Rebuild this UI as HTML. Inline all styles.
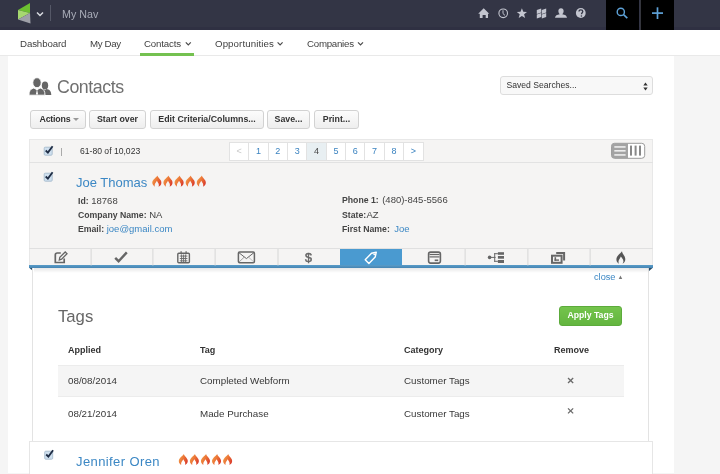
<!DOCTYPE html>
<html><head><meta charset="utf-8">
<style>
*{margin:0;padding:0;box-sizing:border-box}
html,body{width:720px;height:474px;overflow:hidden;background:#f5f5f5;font-family:"Liberation Sans",sans-serif;color:#444}
.a,.nv,.btn,.th,.td,#list,#exp{will-change:transform}
.a{position:absolute;white-space:nowrap}
#top{position:absolute;left:0;top:0;width:720px;height:30px;background:linear-gradient(#333545 0,#333545 27px,#2f3042 27px)}
#nav{position:absolute;left:0;top:30px;width:720px;height:26px;background:#fff;border-bottom:1px solid #e9e9e9}
.nv{position:absolute;top:8px;font-size:9.7px;color:#3f3f3f;line-height:12px;letter-spacing:-0.2px}
.chev{display:inline-block;width:4px;height:4px;border-right:1.3px solid #444;border-bottom:1.3px solid #444;transform:rotate(45deg);margin-left:6px;position:relative;top:-2px}
#panel{position:absolute;left:8px;top:56px;width:666px;height:417px;background:#fff}
.btn{position:absolute;top:110px;height:19px;border:1px solid #d2d2d2;border-radius:3px;background:linear-gradient(#fcfcfc,#eeeeee);font-size:8.8px;font-weight:bold;color:#333;text-align:center;line-height:17px}
#list{position:absolute;left:29px;top:139px;width:624px;height:129px;background:#f5f4f3;border:1px solid #e8e8e8}
.pg{flex:1;height:100%;border-left:1px solid #e2e2e2;font-size:9px;color:#3b83c0;text-align:center;line-height:16.5px}
.lbl{font-weight:bold;color:#444}
.f9{font-size:9.5px}
.f9 b{font-size:8.7px}
.tab{position:absolute;top:248px;height:17px;width:62px;border-right:1px solid #ddd}
#exp{position:absolute;left:32px;top:268px;width:617px;height:174px;background:#fff;border:1px solid #e3e3e3;border-top:none}
.th{position:absolute;top:345px;font-size:9px;font-weight:bold;color:#333}
.td{position:absolute;font-size:9.8px;color:#383838}
</style></head><body>
<div id="top">
  <svg class="a" style="left:17px;top:2px" width="15" height="23" viewBox="0 0 15 23">
    <polygon points="1,8 13,1 13,11" fill="#6cbf30"/>
    <polygon points="1,8 13,11 1,17.5" fill="#a6d870"/>
    <polygon points="1,17.5 13,11 13.5,21.5" fill="#9ea0a8"/>
  </svg>
  <svg class="a" style="left:36px;top:11px" width="8" height="6" viewBox="0 0 8 6"><polyline points="1,1.5 4,4.5 7,1.5" fill="none" stroke="#d8dae0" stroke-width="1.5"/></svg>
  <div class="a" style="left:50px;top:5px;width:1px;height:16px;background:#555867"></div>
  <div class="a" style="left:61.5px;top:8px;font-size:10.7px;line-height:13px;color:#a9acb8">My Nav</div>
  <svg class="a" style="left:470px;top:0" width="130" height="29" viewBox="470 0 130 29" fill="#c3c5cf">
    <path d="M478.2,13.8 L483.7,8.3 L489.2,13.8 L488,13.8 L488,18 L485.7,18 L485.7,15 L482.6,15 L482.6,18 L479.8,18 L479.8,13.8 Z"/>
    <circle cx="503.2" cy="13.3" r="4.3" fill="none" stroke="#c3c5cf" stroke-width="1.1"/>
    <polyline points="503,10.3 503,13.6 505,15.4" fill="none" stroke="#c3c5cf" stroke-width="1"/>
    <path d="M521.9,8.3 L523.3,11.7 L527,11.9 L524.1,14.3 L525.1,18 L521.9,15.9 L518.7,18 L519.7,14.3 L516.8,11.9 L520.5,11.7 Z"/>
    <path d="M536.8,10 L541.2,8.4 L541.2,12.4 L536.8,14 Z M536.8,14.6 L541.2,13 L541.2,16.9 L536.8,18.5 Z M541.8,10 L546.2,8.4 L546.2,12.4 L541.8,14 Z M541.8,14.6 L546.2,13 L546.2,16.9 L541.8,18.5 Z"/>
    <path d="M561,8.3 C563,8.3 563.8,9.8 563.6,11.5 C563.4,13 562.7,13.8 562.3,14.2 C565,14.6 566.8,15.6 567,17.8 L555,17.8 C555.2,15.6 557,14.6 559.7,14.2 C559.3,13.8 558.6,13 558.4,11.5 C558.2,9.8 559,8.3 561,8.3 Z"/>
    <circle cx="580.8" cy="13" r="4.9"/>
    <path d="M579,11.6 C579,10.4 579.9,9.8 580.9,9.8 C582,9.8 582.8,10.5 582.8,11.5 C582.8,12.6 581.5,12.9 581.5,14.2" fill="none" stroke="#333545" stroke-width="1.3"/>
    <circle cx="581.4" cy="16" r="0.8" fill="#333545"/>
  </svg>
  <div class="a" style="left:606px;top:0;width:33px;height:30px;background:#000"></div>
  <div class="a" style="left:639.5px;top:0;width:1.5px;height:30px;background:#34353c"></div>
  <div class="a" style="left:641px;top:0;width:33px;height:30px;background:#000"></div>
  <svg class="a" style="left:606px;top:0" width="68" height="29" viewBox="606 0 68 29">
    <circle cx="620.8" cy="11.9" r="3.6" fill="none" stroke="#5ea2d8" stroke-width="1.4"/>
    <line x1="623.4" y1="14.5" x2="627.3" y2="18.2" stroke="#5ea2d8" stroke-width="1.7"/>
    <line x1="652" y1="13.1" x2="663" y2="13.1" stroke="#5ea2d8" stroke-width="1.7"/>
    <line x1="657.5" y1="7.3" x2="657.5" y2="19" stroke="#5ea2d8" stroke-width="1.7"/>
  </svg>
</div>
<div id="nav">
  <div class="nv" style="left:19.5px;letter-spacing:-0.12px">Dashboard</div>
  <div class="nv" style="left:89.5px;letter-spacing:-0.35px">My Day</div>
  <div class="nv" style="left:143.5px;letter-spacing:-0.15px">Contacts</div>
  <div class="nv" style="left:214.5px;letter-spacing:0.1px">Opportunities</div>
  <div class="nv" style="left:307px;letter-spacing:-0.25px">Companies</div>
  <svg class="a" style="left:0;top:0" width="400" height="26" viewBox="0 30 400 26" fill="none" stroke="#4a4a4a" stroke-width="1.2">
   <polyline points="185.8,42.3 188.3,44.8 190.8,42.3"/>
   <polyline points="277.6,42.3 280.1,44.8 282.6,42.3"/>
   <polyline points="358,42.3 360.5,44.8 363,42.3"/>
  </svg>
  <div class="a" style="left:140px;top:23px;width:54px;height:3px;background:#74c150"></div>
</div>
<div id="panel"></div>
<svg class="a" style="left:28px;top:76px" width="25" height="20" viewBox="28 76 25 20">
  <g fill="#666">
   <ellipse cx="45" cy="85.4" rx="3.2" ry="3.9"/>
   <path d="M41,95 L41,90.5 C41.5,89.6 42.5,89.2 43.6,88.9 L45,90 L46.4,88.9 C49.5,89.4 51.3,90.8 51.3,95 Z"/>
  </g>
  <g fill="#666" stroke="#fff" stroke-width="0.9">
   <ellipse cx="37" cy="82.7" rx="4.2" ry="5"/>
   <path d="M29,95.2 C29,91.2 30.3,88.9 33.8,88 L37,89.8 L40.2,88 C43.7,88.9 45,91.2 45,95.2 Z"/>
  </g>
  <path d="M36.3,89.4 L37.7,89.4 L37.3,90.6 L38.1,94.4 L35.9,94.4 L36.7,90.6 Z" fill="#fff"/>
</svg>
<div class="a" style="left:57.3px;top:76.6px;font-size:17.8px;line-height:20px;letter-spacing:-0.45px;color:#707070">Contacts</div>
<div class="btn" style="left:30px;width:56px;text-align:left;padding-left:8.5px"><span style="letter-spacing:-0.2px">Actions</span><span style="display:inline-block;width:0;height:0;border-left:3px solid transparent;border-right:3px solid transparent;border-top:3.5px solid #999;margin-left:3px;position:relative;top:-1.5px"></span></div>
<div class="btn" style="left:89px;width:57px">Start over</div>
<div class="btn" style="left:150px;width:114px">Edit Criteria/Columns...</div>
<div class="btn" style="left:267px;width:43px">Save...</div>
<div class="btn" style="left:314px;width:45px">Print...</div>
<div class="a" style="left:500px;top:76px;width:153px;height:19px;border:1px solid #ddd;border-radius:3px;background:#f8f8f8;font-size:8.6px;line-height:17px;padding-left:5.5px;color:#333">Saved Searches...<svg style="position:absolute;left:142px;top:5px" width="5" height="9" viewBox="0 0 5 9"><polygon points="0.3,3.6 2.5,0.4 4.7,3.6" fill="#333"/><polygon points="0.3,5.4 2.5,8.6 4.7,5.4" fill="#333"/></svg></div>

<div id="list"></div>
<div class="a" style="left:29px;top:161.5px;width:624px;height:1px;background:#e2e2e2"></div>
<svg class="a" style="left:40px;top:142px" width="16" height="16" viewBox="40 142 16 16">
  <rect x="44.2" y="147.2" width="8" height="8" rx="1" fill="#cfe0ef" stroke="#9fb5c8" stroke-width="0.8"/>
  <polyline points="45.7,150.5 47.9,152.6 52.6,146.3" fill="none" stroke="#1f2d45" stroke-width="1.8"/>
</svg>
<div class="a" style="left:61px;top:147.5px;width:1px;height:8px;background:#aaa"></div>
<div class="a" style="left:79.5px;top:146px;color:#333;line-height:11px;font-size:8.6px">61-80 of 10,023</div>
<div class="a" style="left:229px;top:141.5px;width:194.5px;height:18.5px;border:1px solid #e2e2e2;background:#fff;display:flex">
<div class="pg" style="color:#c8c8c8;border-left:none">&lt;</div><div class="pg">1</div><div class="pg">2</div><div class="pg">3</div><div class="pg" style="background:#e8eff2;color:#444">4</div><div class="pg">5</div><div class="pg">6</div><div class="pg">7</div><div class="pg">8</div><div class="pg">&gt;</div>
</div>
<svg class="a" style="left:610px;top:142px" width="36" height="18" viewBox="610 142 36 18">
  <rect x="611.5" y="143.3" width="33.2" height="15" rx="3" fill="#fff" stroke="#999" stroke-width="1"/>
  <path d="M614.5,143.3 L628,143.3 L628,158.3 L614.5,158.3 A3,3 0 0 1 611.5,155.3 L611.5,146.3 A3,3 0 0 1 614.5,143.3 Z" fill="#a3a3a3"/>
  <rect x="614.3" y="146.3" width="11.3" height="1.3" fill="#fff"/>
  <rect x="614.3" y="150.2" width="11.3" height="1.3" fill="#fff"/>
  <rect x="614.3" y="154.3" width="11.3" height="1.3" fill="#fff"/>
  <rect x="630" y="145.6" width="2" height="10" fill="#888"/>
  <rect x="634.6" y="145.6" width="2" height="10" fill="#888"/>
  <rect x="639" y="145.6" width="2" height="10" fill="#888"/>
</svg>
<svg class="a" style="left:40px;top:168px" width="16" height="16" viewBox="40 168 16 16">
  <rect x="44.2" y="173.2" width="8" height="8" rx="1" fill="#cfe0ef" stroke="#9fb5c8" stroke-width="0.8"/>
  <polyline points="45.7,176.5 47.9,178.6 52.6,172.3" fill="none" stroke="#1f2d45" stroke-width="1.8"/>
</svg>
<div class="a" style="left:75.5px;top:175px;font-size:13px;line-height:15px;color:#3b87c4">Joe Thomas</div>
<div class="a f9" style="left:78px;top:194.8px;line-height:11px;color:#444"><b>Id:</b> 18768</div>
<div class="a f9" style="left:78px;top:209px;line-height:11px;color:#444"><b>Company Name:</b> NA</div>
<div class="a f9" style="left:78px;top:222.5px;line-height:11px;color:#444"><b>Email:</b> <span style="color:#3b87c4">joe@gmail.com</span></div>
<div class="a f9" style="left:342px;top:194px;line-height:11px;color:#444"><b>Phone 1:</b><span style="margin-left:3.5px">(480)-845-5566</span></div>
<div class="a f9" style="left:342px;top:208.5px;line-height:11px;color:#444"><b>State:</b><span style="margin-left:0.3px">AZ</span></div>
<div class="a f9" style="left:342px;top:222.5px;line-height:11px;color:#444"><b>First Name:</b><span style="color:#3b87c4;margin-left:4.5px">Joe</span></div>
<div class="a" style="left:29px;top:248px;width:624px;height:1px;background:#e0e0e0"></div>
<div class="a" style="left:340px;top:248.5px;width:62px;height:17px;background:#4a9ad0"></div>
<div class="a" style="left:29px;top:265px;width:624px;height:3px;background:linear-gradient(#5a9cc8,#4585b3)"></div>
<svg class="a" style="left:29px;top:267px" width="624" height="6" viewBox="29 267 624 6"><polygon points="29.5,268 33.5,268 33.5,271.5" fill="#2a4d68"/><polygon points="652.5,268 648.5,268 648.5,271.5" fill="#2a4d68"/></svg>
<svg class="a" style="left:29px;top:248px" width="624" height="18" viewBox="29 248 624 18">
  <g fill="#d6d6d6">
   <rect x="90.6" y="249" width="1" height="16.5"/><rect x="152.4" y="249" width="1" height="16.5"/><rect x="214.6" y="249" width="1" height="16.5"/><rect x="277.5" y="249" width="1" height="16.5"/>
   <rect x="464.6" y="249" width="1" height="16.5"/><rect x="527.4" y="249" width="1" height="16.5"/><rect x="589.6" y="249" width="1" height="16.5"/>
  </g>
  <g fill="none" stroke="#666" stroke-width="1.7">
   <path d="M60.8,253 L57.3,253 Q55.3,253 55.3,255 L55.3,262.5 L64.2,262.5 L64.2,258.6" stroke-width="1.7"/>
   <path d="M59.3,260 L59.8,257.4 L65.2,252 L67,253.8 L61.6,259.2 Z" stroke-width="1.3"/>
   <polyline points="115.2,257.8 118.6,261.2 126.8,252.4" stroke-width="2.4"/>
   <rect x="177.8" y="253.2" width="11.6" height="9.6" rx="1" stroke-width="1.4"/>
   <rect x="238.4" y="252" width="16" height="10.8" rx="1.2" stroke-width="1.5"/>
   <polyline points="238.8,252.6 246.4,258.6 254,252.6" stroke-width="1"/><polyline points="238.8,262.2 244,257.2 M248.8,257.2 254,262.2" stroke-width="0.6" stroke="#999"/><line x1="238.8" y1="262.2" x2="244.4" y2="257" stroke-width="0.6" stroke="#999"/><line x1="254" y1="262.2" x2="248.4" y2="257" stroke-width="0.6" stroke="#999"/>
  </g>
  <g fill="#666">
   <rect x="180.5" y="251.2" width="1.2" height="3"/><rect x="185.5" y="251.2" width="1.2" height="3"/>
   <rect x="179.8" y="255.6" width="7.6" height="0.9"/><rect x="179.8" y="258" width="7.6" height="0.9"/><rect x="179.8" y="260.4" width="7.6" height="0.9"/>
   <rect x="181.2" y="254.5" width="0.9" height="7.5"/><rect x="183.2" y="254.5" width="0.9" height="7.5"/><rect x="185.2" y="254.5" width="0.9" height="7.5"/>
  </g>
  <text x="308.5" y="261.6" font-family="Liberation Sans" font-size="12.5" fill="#666" stroke="#666" stroke-width="0.5" text-anchor="middle">$</text>
  <g fill="none" stroke="#fff" stroke-width="1.4">
   <path d="M365.2,259.7 L371.5,253.3 L376.3,252.2 L375.2,257 L368.9,263.4 Z" stroke-linejoin="round"/>
   <circle cx="374.2" cy="254.3" r="0.9" fill="#fff" stroke="none"/>
  </g>
  <g fill="none" stroke="#666">
   <rect x="428.6" y="252.1" width="11.8" height="11" rx="2" stroke-width="1.6"/>
   <line x1="429.5" y1="254.5" x2="439.5" y2="254.5" stroke-width="1.2"/>
   <line x1="429.5" y1="256.9" x2="439.5" y2="256.9" stroke-width="1.2"/>
  </g>
  <g fill="#666">
   <rect x="434.7" y="259.5" width="3.5" height="1.6"/>
   <circle cx="489.6" cy="257.4" r="1.8"/>
   <rect x="489.6" y="256.9" width="6" height="1"/>
   <rect x="494.2" y="253.2" width="1" height="8.6"/>
   <rect x="494.2" y="253.2" width="3.7" height="1"/><rect x="494.2" y="260.8" width="3.7" height="1"/>
   <rect x="497.9" y="252.2" width="6.1" height="2.6"/><rect x="497.9" y="256" width="6.1" height="2.7"/><rect x="497.9" y="260" width="6.1" height="3"/>
   <path d="M556.2,251.9 L565.1,251.9 L565.1,260.5 L563.1,260.5 L563.1,253.9 L556.2,253.9 Z"/>
   <rect x="554.5" y="257.2" width="1.6" height="3.6"/><rect x="554.5" y="259.4" width="4.5" height="1.4"/>
  </g>
  <rect x="552" y="255.7" width="9.6" height="7.1" fill="none" stroke="#666" stroke-width="2"/>
  <path d="M622,251.3 C620,254 616.4,256 616.4,259.5 C616.4,261.5 617.5,263 619,263.8 C618.3,262.5 618.3,261 619.2,259.6 C619.8,258.6 620.5,257.8 620.8,256.6 C621.8,258 623.4,259.4 623.4,261.3 C623.4,262.2 623,263.2 622.4,263.8 C624.2,263 625.3,261.4 625.3,259.3 C625.3,256 622.5,254.5 622,251.3 Z" fill="#555"/>
</svg>

<div id="exp"></div>
<div class="a" style="left:33.5px;top:268px;width:615px;height:5px;background:linear-gradient(rgba(0,0,0,0.09),rgba(0,0,0,0))"></div>
<div class="a" style="left:593.5px;top:271.8px;font-size:9.2px;line-height:11px;color:#3b87c4">close<span style="font-size:6px;color:#777;position:relative;top:-1.3px;margin-left:2px">&#9650;</span></div>
<div class="a" style="left:58px;top:307.3px;font-size:16.7px;line-height:20px;color:#666">Tags</div>
<div class="a" style="left:559px;top:306px;width:63px;height:19.5px;border-radius:3px;border:1px solid #5cab3b;background:linear-gradient(#74c44c,#63b53f);color:#fff;font-size:8.7px;font-weight:bold;text-align:center;line-height:17.5px">Apply Tags</div>
<div class="th" style="left:68px">Applied</div>
<div class="th" style="left:200px">Tag</div>
<div class="th" style="left:404px">Category</div>
<div class="th" style="left:554px">Remove</div>
<div class="a" style="left:58px;top:365px;width:566px;height:31.5px;background:#f5f5f5;border-top:1px solid #ececec;border-bottom:1px solid #ececec"></div>
<div class="td" style="left:68px;top:375.2px">08/08/2014</div>
<div class="td" style="left:200px;top:375.2px">Completed Webform</div>
<div class="td" style="left:404px;top:375.2px">Customer Tags</div>
<div class="td" style="left:68px;top:408.2px">08/21/2014</div>
<div class="td" style="left:200px;top:408.2px">Made Purchase</div>
<div class="td" style="left:404px;top:408.2px">Customer Tags</div>
<svg class="a" style="left:564px;top:374px" width="14" height="44" viewBox="564 374 14 44" stroke="#6a6a6a" stroke-width="1.3">
 <line x1="568" y1="378" x2="573.2" y2="383"/><line x1="573.2" y1="378" x2="568" y2="383"/>
 <line x1="568" y1="408.4" x2="573.2" y2="413.4"/><line x1="573.2" y1="408.4" x2="568" y2="413.4"/>
</svg>
<div class="a" style="left:29px;top:441px;width:624px;height:40px;background:#fff;border:1px solid #e6e6e6"></div>
<div class="a" style="left:76px;top:453.8px;font-size:13px;line-height:15px;letter-spacing:0.4px;color:#3b87c4">Jennifer Oren</div>
<svg width="0" height="0" style="position:absolute">
 <defs>
  <linearGradient id="fg" x1="0" y1="0.2" x2="1" y2="0.8"><stop offset="0" stop-color="#f4a24a"/><stop offset="0.5" stop-color="#ea7035"/><stop offset="1" stop-color="#d8352b"/></linearGradient>
  <symbol id="fl" viewBox="0 0 10 12"><path d="M5.6,0.2 C4.5,2.3 0.3,4.3 0.2,7.5 C0.2,9.3 1.4,10.8 2.8,11.8 C2.5,10.3 2.9,8.8 3.7,7.8 C4.2,7.1 4.7,6.4 4.9,5.6 C5.5,6.8 6.6,7.9 6.9,9.3 C7.1,10.2 7,11 6.7,11.8 C8.4,11 9.7,9.5 9.7,7.6 C9.7,4.5 6.2,2.8 5.6,0.2 Z"/></symbol>
 </defs>
</svg>
<svg class="a" style="left:150px;top:174px" width="60" height="14" viewBox="150 174 60 14" fill="url(#fg)">
 <use href="#fl" x="152" y="175.3" width="9.8" height="11.6"/><use href="#fl" x="163.1" y="175.3" width="9.8" height="11.6"/><use href="#fl" x="174.2" y="175.3" width="9.8" height="11.6"/><use href="#fl" x="185.3" y="175.3" width="9.8" height="11.6"/><use href="#fl" x="196.4" y="175.3" width="9.8" height="11.6"/>
</svg>
<svg class="a" style="left:176px;top:452px" width="60" height="15" viewBox="176 452 60 15" fill="url(#fg)">
 <use href="#fl" x="178.4" y="453.8" width="9.8" height="11.5"/><use href="#fl" x="189.5" y="453.8" width="9.8" height="11.5"/><use href="#fl" x="200.6" y="453.8" width="9.8" height="11.5"/><use href="#fl" x="211.7" y="453.8" width="9.8" height="11.5"/><use href="#fl" x="222.8" y="453.8" width="9.8" height="11.5"/>
</svg>
<svg class="a" style="left:40px;top:446px" width="16" height="16" viewBox="40 446 16 16">
  <rect x="44.7" y="451.2" width="8" height="8" rx="1" fill="#cfe0ef" stroke="#9fb5c8" stroke-width="0.8"/>
  <polyline points="46.2,454.5 48.4,456.6 53.1,450.3" fill="none" stroke="#1f2d45" stroke-width="1.8"/>
</svg>
</body></html>
